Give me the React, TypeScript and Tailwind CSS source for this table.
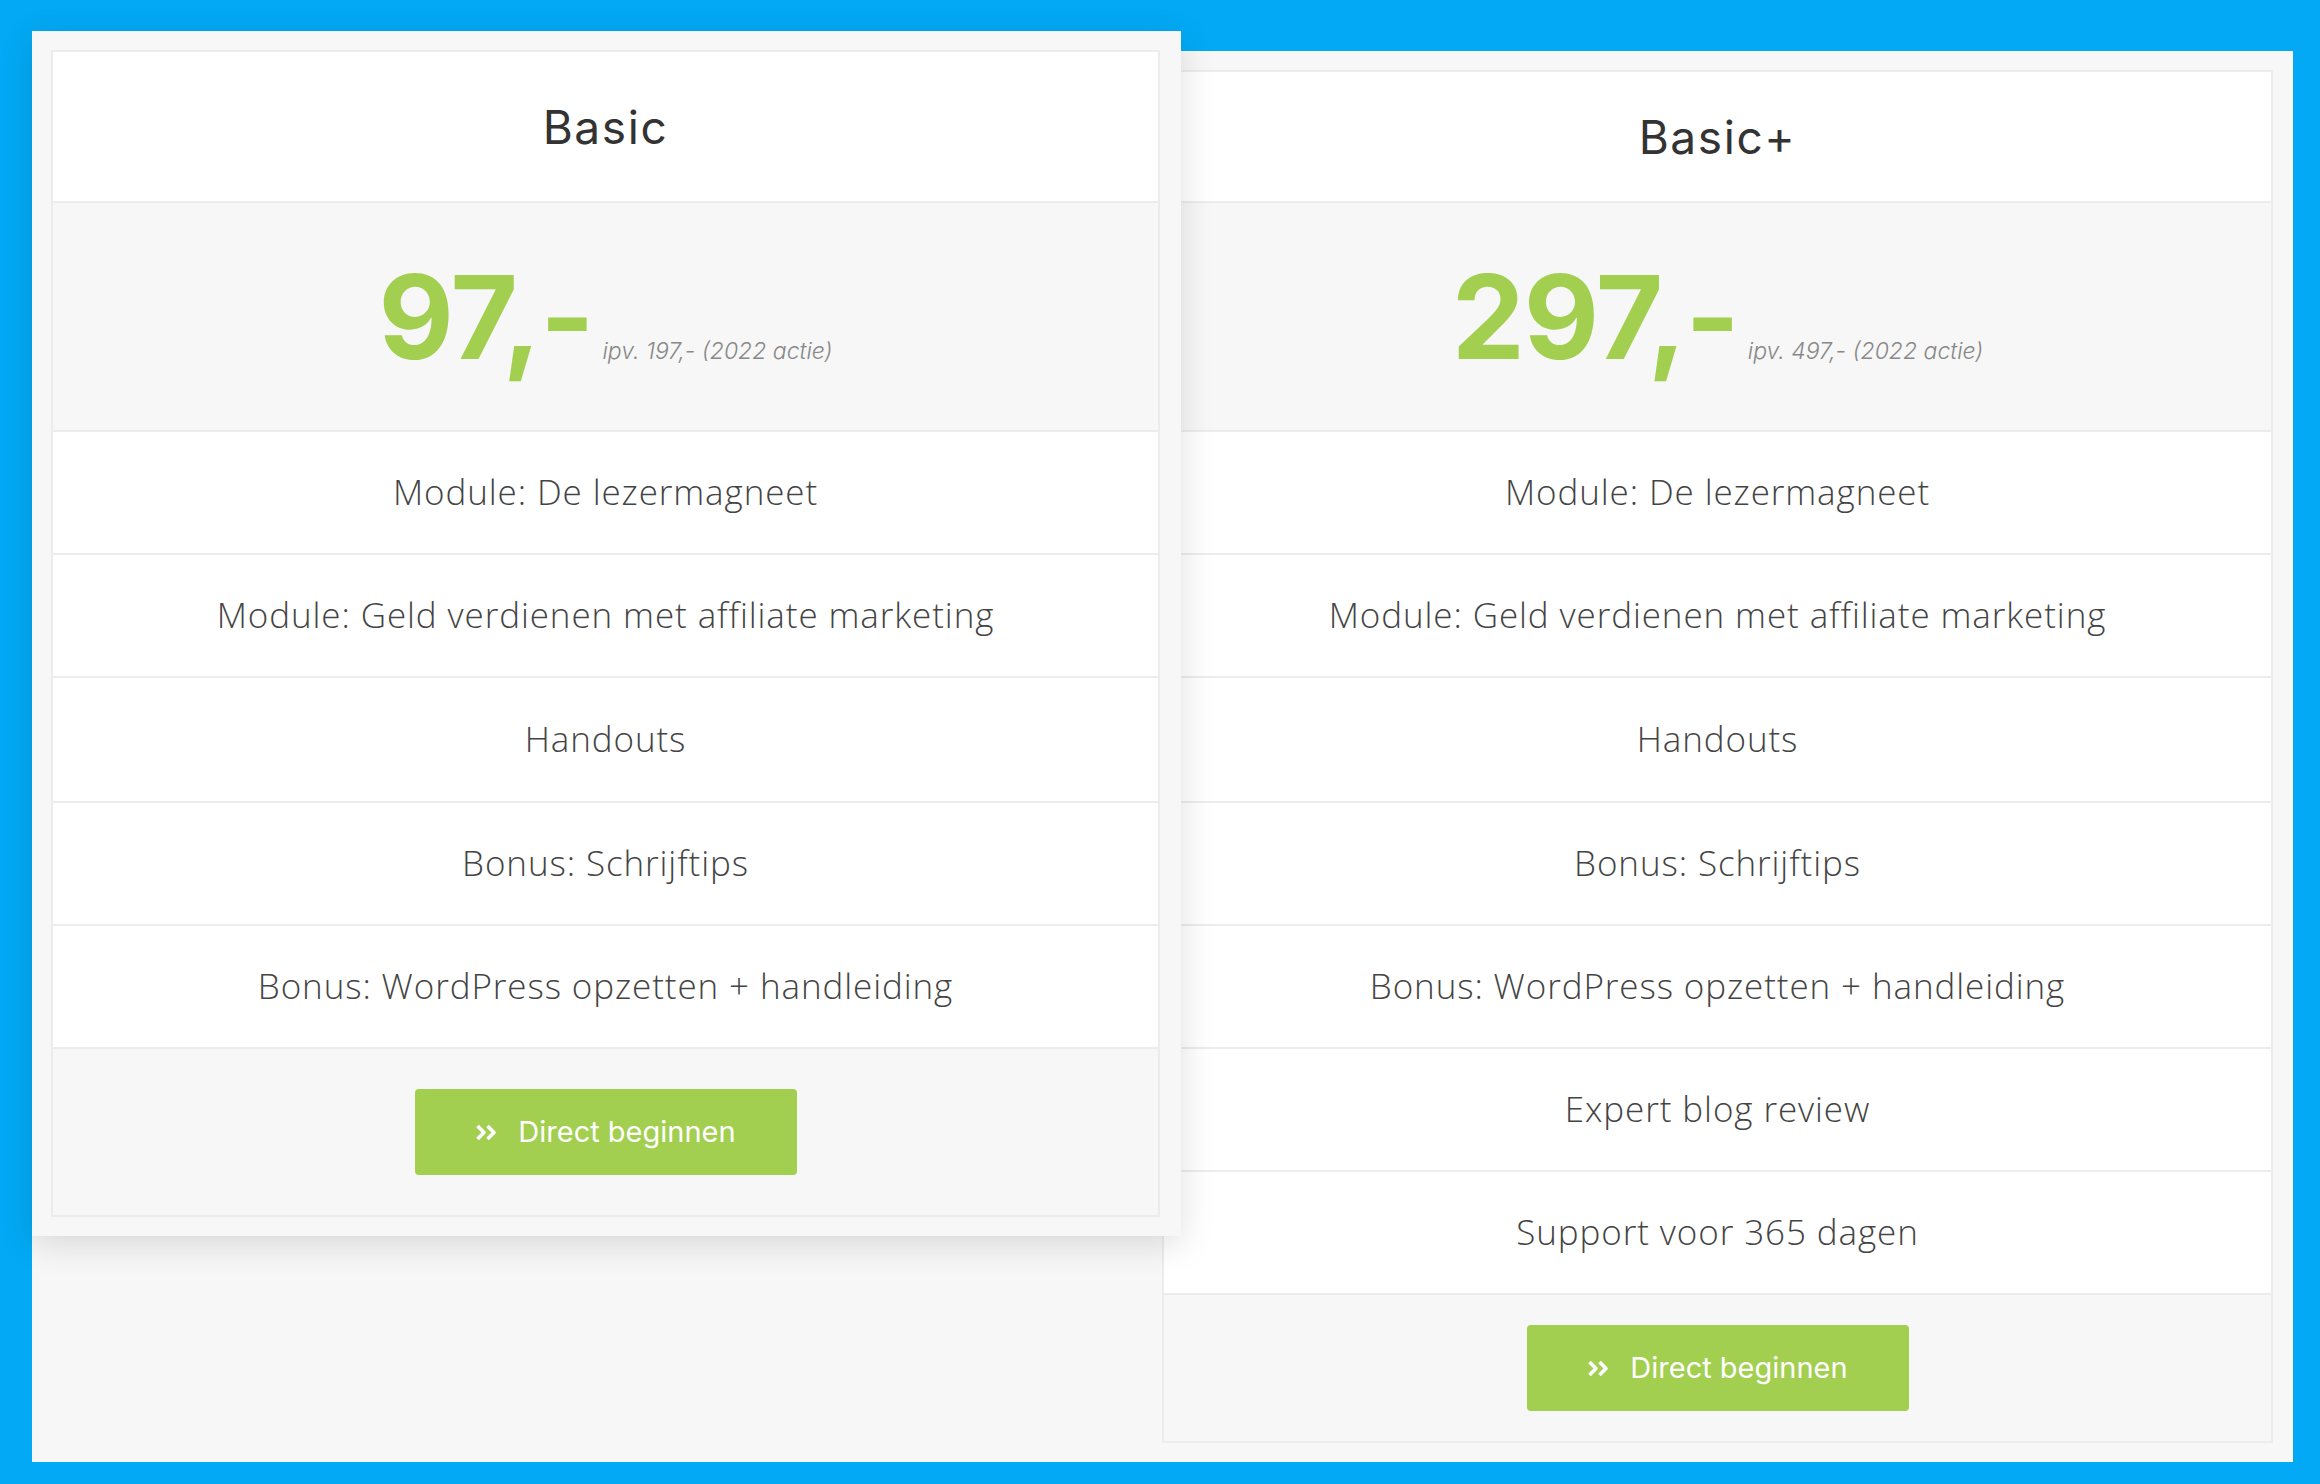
interface Plan {
  name: string;
  price: string;
  oldPrice: string;
  features: string[];
}

const plans: Plan[] = [
  {
    name: 'Basic',
    price: '97,-',
    oldPrice: 'ipv. 197,- (2022 actie)',
    features: [
      'Module: De lezermagneet',
      'Module: Geld verdienen met affiliate marketing',
      'Handouts',
      'Bonus: Schrijftips',
      'Bonus: WordPress opzetten + handleiding',
    ],
  },
  {
    name: 'Basic+',
    price: '297,-',
    oldPrice: 'ipv. 497,- (2022 actie)',
    features: [
      'Module: De lezermagneet',
      'Module: Geld verdienen met affiliate marketing',
      'Handouts',
      'Bonus: Schrijftips',
      'Bonus: WordPress opzetten + handleiding',
      'Expert blog review',
      'Support voor 365 dagen',
    ],
  },
];

const headingFont = { fontFamily: '"Inter", "Noto Sans", sans-serif' };
const bodyFont = { fontFamily: '"Open Sans", "Noto Sans", sans-serif' };

function DoubleAngle() {
  return (
    <svg width="22" height="17" viewBox="0 0 22 17" fill="none" stroke="currentColor" strokeWidth="3.6" strokeLinejoin="round">
      <path d="M2.5 2 L9 8.5 L2.5 15" />
      <path d="M12.5 2 L19 8.5 L12.5 15" />
    </svg>
  );
}

function PricingTable({ plan, active }: { plan: Plan; active?: boolean }) {
  return (
    <div className="border-2 border-[#ececec] bg-white">
      {/* Header */}
      <div
        className={`flex items-center justify-center border-b-2 border-[#ececec] ${active ? 'h-[151px]' : 'h-[131px]'}`}
      >
        <h3 className="text-[46px] font-normal leading-none tracking-[1.6px] text-[#333]" style={headingFont}>
          {plan.name}
        </h3>
      </div>

      {/* Price */}
      <div className="flex h-[229px] items-center justify-center border-b-2 border-[#ececec] bg-[#f7f7f7]">
        <div className="flex items-baseline gap-[9px]">
          <span className="text-[116px] font-bold leading-none tracking-[-1px] text-[#a2cf4f]" style={headingFont}>
            {plan.price}
          </span>
          <span className="text-[23px] font-light italic text-[#888]" style={headingFont}>
            {plan.oldPrice}
          </span>
        </div>
      </div>

      {/* Features */}
      {plan.features.map((feature, idx) => (
        <div
          key={feature}
          className={`flex items-center justify-center border-b-2 border-[#ececec] text-[35px] font-light tracking-[0.9px] text-[#444] ${idx === 2 ? 'h-[125px]' : 'h-[123px]'}`}
          style={bodyFont}
        >
          {feature}
        </div>
      ))}

      {/* Footer */}
      <div className={`flex items-center justify-center bg-[#f7f7f7] ${active ? 'h-[166px]' : 'h-[146px]'}`}>
        <button
          className="flex h-[86px] w-[382px] items-center justify-center gap-[21px] rounded-[4px] bg-[#a2cf4f] text-[29px] text-white"
          style={headingFont}
        >
          <DoubleAngle />
          <span>Direct beginnen</span>
        </button>
      </div>
    </div>
  );
}

export default function App() {
  return (
    <div className="h-[1484px] w-[2320px] bg-[#03a9f4] pb-[22px] pl-[32px] pr-[27px] pt-[51px]">
      <div className="grid h-full grid-cols-[1130px_1131px] items-start bg-[#f7f7f7]">
        <div className="relative z-10 -mr-[19px] -mt-[20px] bg-[#f7f7f7] pb-[19px] pl-[19px] pr-[21px] pt-[19px] shadow-[0_8px_32px_rgba(0,0,0,0.13)]">
          <PricingTable plan={plans[0]} active />
        </div>
        <div className="pb-[19px] pr-[20px] pt-[19px]">
          <PricingTable plan={plans[1]} />
        </div>
      </div>
    </div>
  );
}
